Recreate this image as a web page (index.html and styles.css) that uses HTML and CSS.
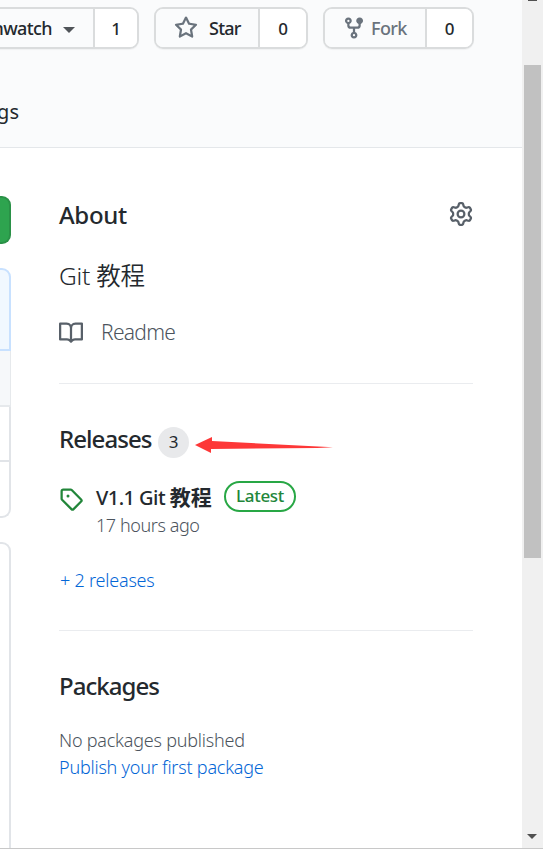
FILE: index.html
```html
<!DOCTYPE html>
<html lang="en">
<head>
<meta charset="utf-8">
<title>Repository</title>
<link rel="stylesheet" href="styles.css">
</head>
<body>
<div class="window">
  <div class="page">
    <header class="header">
      <div class="actions">
        <div class="action action-watch">
          <button class="action-button"><span class="watch-label">Unwatch</span><i class="caret"></i></button>
          <span class="action-count">1</span>
        </div>
        <div class="action action-star">
          <button class="action-button">
            <svg class="icon" viewBox="0 0 16 16"><path d="M8 .25a.75.75 0 01.673.418l1.882 3.815 4.21.612a.75.75 0 01.416 1.279l-3.046 2.97.719 4.192a.75.75 0 01-1.088.791L8 12.347l-3.766 1.98a.75.75 0 01-1.088-.79l.72-4.194L.818 6.374a.75.75 0 01.416-1.28l4.21-.611L7.327.668A.75.75 0 018 .25zm0 2.445L6.615 5.5a.75.75 0 01-.564.41l-3.097.45 2.24 2.184a.75.75 0 01.216.664l-.528 3.084 2.769-1.456a.75.75 0 01.698 0l2.77 1.456-.53-3.084a.75.75 0 01.216-.664l2.24-2.183-3.096-.45a.75.75 0 01-.564-.41L8 2.694v.001z"/></svg>
            <span class="star-label">Star</span>
          </button>
          <span class="action-count">0</span>
        </div>
        <div class="action action-fork">
          <button class="action-button">
            <svg class="icon" viewBox="0 0 16 16"><path d="M5 3.25a.75.75 0 11-1.5 0 .75.75 0 011.5 0zm0 2.122a2.25 2.25 0 10-1.5 0v.878A2.25 2.25 0 005.75 8.5h1.5v2.128a2.251 2.251 0 101.5 0V8.5h1.5a2.25 2.25 0 002.25-2.25v-.878a2.25 2.25 0 10-1.5 0v.878a.75.75 0 01-.75.75h-4.5A.75.75 0 015 6.25v-.878zm3.75 7.378a.75.75 0 11-1.5 0 .75.75 0 011.5 0zm3-8.75a.75.75 0 100-1.5.75.75 0 000 1.5z"/></svg>
            <span class="fork-label">Fork</span>
          </button>
          <span class="action-count">0</span>
        </div>
      </div>
      <nav class="tabs"><span>Settings</span></nav>
    </header>
    <div class="content">
      <div class="files">
        <div class="code-button"></div>
        <div class="notice"></div>
        <div class="commit-row"></div>
        <div class="file-row"></div>
        <div class="file-row file-row-last"></div>
        <div class="readme-box"></div>
      </div>
      <aside class="sidebar">
        <section>
          <div class="about-head">
            <h2 class="about-title">About</h2>
            <svg class="icon" viewBox="0 0 16 16"><path fill-rule="evenodd" d="M7.429 1.525a6.593 6.593 0 011.142 0c.036.003.108.036.137.146l.289 1.105c.147.56.55.967.997 1.189.174.086.341.183.501.29.417.278.97.423 1.53.27l1.102-.303c.11-.03.175.016.195.046.219.31.41.641.573.989.014.031.022.11-.059.19l-.815.806c-.411.406-.562.957-.53 1.456a4.588 4.588 0 010 .582c-.032.499.119 1.05.53 1.456l.815.806c.08.08.073.159.059.19a6.494 6.494 0 01-.573.99c-.02.029-.086.074-.195.045l-1.103-.303c-.559-.153-1.112-.008-1.529.27-.16.107-.327.204-.5.29-.449.222-.851.628-.998 1.189l-.289 1.105c-.029.11-.101.143-.137.146a6.613 6.613 0 01-1.142 0c-.036-.003-.108-.037-.137-.146l-.289-1.105c-.147-.56-.55-.967-.997-1.189a4.502 4.502 0 01-.501-.29c-.417-.278-.97-.423-1.53-.27l-1.102.303c-.11.03-.175-.016-.195-.046a6.492 6.492 0 01-.573-.989c-.014-.031-.022-.11.059-.19l.815-.806c.411-.406.562-.957.53-1.456a4.587 4.587 0 010-.582c.032-.499-.119-1.05-.53-1.456l-.815-.806c-.08-.08-.073-.159-.059-.19a6.44 6.44 0 01.573-.99c.02-.029.086-.075.195-.045l1.103.303c.559.153 1.112.008 1.529-.27.16-.107.327-.204.5-.29.449-.222.851-.628.998-1.189l.289-1.105c.029-.11.101-.143.137-.146zM8 0c-.236 0-.47.01-.701.03-.743.065-1.29.615-1.458 1.261l-.29 1.106c-.017.066-.078.158-.211.224a5.994 5.994 0 00-.668.386c-.123.082-.233.09-.3.071L3.27 2.776c-.644-.177-1.392.02-1.82.63a7.977 7.977 0 00-.704 1.217c-.315.675-.111 1.422.363 1.891l.815.806c.05.048.098.147.088.294a6.084 6.084 0 000 .772c.01.147-.038.246-.088.294l-.815.806c-.474.469-.678 1.216-.363 1.891.2.428.436.835.704 1.218.428.609 1.176.806 1.82.63l1.103-.303c.066-.019.176-.011.299.071.213.143.436.272.668.386.133.066.194.158.212.224l.289 1.106c.169.646.715 1.196 1.458 1.26a8.094 8.094 0 001.402 0c.743-.064 1.29-.614 1.458-1.26l.29-1.106c.017-.066.078-.158.211-.224a5.98 5.98 0 00.668-.386c.123-.082.233-.09.3-.071l1.102.302c.644.177 1.392-.02 1.82-.63.268-.382.505-.789.704-1.217.315-.675.111-1.422-.364-1.891l-.814-.806c-.05-.048-.098-.147-.088-.294a6.1 6.1 0 000-.772c-.01-.147.039-.246.088-.294l.814-.806c.475-.469.679-1.216.364-1.891a7.992 7.992 0 00-.704-1.218c-.428-.609-1.176-.806-1.82-.63l-1.103.303c-.066.019-.176.011-.299-.071a5.991 5.991 0 00-.668-.386c-.133-.066-.194-.158-.212-.224L10.16 1.29C9.99.645 9.444.095 8.701.031A8.094 8.094 0 008 0zm1.5 8a1.5 1.5 0 11-3 0 1.5 1.5 0 013 0zM11 8a3 3 0 11-6 0 3 3 0 016 0z"/></svg>
          </div>
          <p class="description">Git 教程</p>
          <div class="readme">
            <svg class="icon" viewBox="0 0 16 16"><path fill-rule="evenodd" d="M0 1.75A.75.75 0 01.75 1h4.253c1.227 0 2.317.59 3 1.501A3.744 3.744 0 0111.006 1h4.245a.75.75 0 01.75.75v10.5a.75.75 0 01-.75.75h-4.507a2.25 2.25 0 00-1.591.659l-.622.621a.75.75 0 01-1.06 0l-.622-.621A2.25 2.25 0 005.258 13H.75a.75.75 0 01-.75-.75V1.75zm8.755 3a2.25 2.25 0 012.25-2.25H14.5v9h-3.757c-.71 0-1.4.201-1.992.572l.004-7.322zm-1.504 7.324l.004-5.073-.002-2.253A2.25 2.25 0 005.003 2.5H1.5v9h3.757a3.75 3.75 0 011.994.574z"/></svg>
            <span>Readme</span>
          </div>
        </section>
        <section class="releases">
          <div class="releases-head">
            <h2 class="releases-title">Releases</h2>
            <span class="counter">3</span>
            <svg class="arrow" viewBox="0 0 138 18"><path d="M0 9 17 1v4L138 11.2 122 12 16 13v4z"/></svg>
          </div>
          <div class="release">
            <svg class="icon tag" viewBox="0 0 16 16"><path fill-rule="evenodd" d="M2.5 7.775V2.75a.25.25 0 01.25-.25h5.025a.25.25 0 01.177.073l6.25 6.25a.25.25 0 010 .354l-5.025 5.025a.25.25 0 01-.354 0l-6.25-6.25a.25.25 0 01-.073-.177zm-1.5 0V2.75C1 1.784 1.784 1 2.75 1h5.025c.464 0 .91.184 1.238.513l6.25 6.25a1.75 1.75 0 010 2.474l-5.026 5.026a1.75 1.75 0 01-2.474 0l-6.25-6.25A1.75 1.75 0 011 7.775zM6 5a1 1 0 100 2 1 1 0 000-2z"/></svg>
            <div>
              <div class="release-line"><span class="release-name">V1.1 Git <b>教程</b></span><span class="latest">Latest</span></div>
              <div class="small ago">17 hours ago</div>
            </div>
          </div>
          <a class="small link more">+ 2 releases</a>
        </section>
        <section class="packages">
          <h2 class="packages-title">Packages</h2>
          <div class="small none">No packages published</div>
          <a class="small link publish">Publish your first package</a>
        </section>
      </aside>
    </div>
  </div>
  <div class="scrollbar"><div class="up"></div><div class="thumb"></div><div class="down"></div></div>
</div>
</body>
</html>
```
FILE: styles.css
```css
* { box-sizing: border-box; }
body {
  margin: 0;
  background: #fff;
  color: #24292e;
  font-family: "Noto Sans", "Noto Sans CJK SC", sans-serif;
  font-size: 18px;
  overflow: hidden;
}
h2, p { margin: 0; }
.window { display: flex; width: 543px; height: 849px; border-bottom: 1px solid #c8c8c8; }
.page { display: flex; flex-direction: column; width: 522px; overflow: hidden; }
.icon { flex: none; width: 24px; height: 24px; fill: #586069; }

.header { flex: none; height: 148px; padding-top: 7px; background: #fafbfc; border-bottom: 1px solid #e4e7ea; }
.actions { display: flex; justify-content: flex-end; gap: 15px; padding-right: 48px; }
.action {
  display: flex;
  flex: none;
  height: 42px;
  overflow: hidden;
  border: 2px solid #dadcdd;
  border-radius: 9px;
  box-shadow: 0 1px 1px rgba(27, 31, 35, .04);
}
.action-watch { width: 190px; }
.action-star { width: 154px; }
.action-fork { width: 151px; }
.action-button {
  display: flex;
  align-items: center;
  flex: 1;
  padding: 0;
  border: 0;
  background: #fafbfc;
  color: #24292e;
  font: 500 18px/38px "Noto Sans", sans-serif;
}
.action-watch .action-button { justify-content: flex-end; padding-right: 18px; }
.action-star .action-button { padding-left: 18px; gap: 11px; }
.action-fork .action-button { padding-left: 17px; gap: 5px; color: #6a737d; }
.action .icon { fill: #6a737d; margin-bottom: 1px; }
.action-count {
  flex: none;
  width: 44px;
  border-left: 2px solid #dadcdd;
  background: #fff;
  font-weight: 500;
  font-size: 17px;
  line-height: 39px;
  text-align: center;
}
.action-star .action-count { width: 48px; }
.action-fork .action-count { width: 47px; }
.watch-label { letter-spacing: -.6px; }
.star-label { letter-spacing: -.75px; }
.fork-label { letter-spacing: -.6px; }
.caret { margin: 4px 0 0 11px; border: 6px solid transparent; border-top-color: #505459; border-bottom: 0; }
.tabs { display: flex; justify-content: flex-end; width: 19px; margin-top: 48px; font-size: 20px; line-height: 30px; }

.content { display: flex; flex: 1; min-height: 0; }
.files { width: 11px; padding-top: 48px; }
.code-button { height: 48px; background: #2ea44f; border: 2px solid #2a9147; border-left: 0; border-radius: 0 9px 9px 0; }
.notice { height: 83px; margin-top: 24px; background: #f1f8ff; border: 2px solid #c8e1ff; border-left: 0; border-radius: 0 9px 0 0; }
.commit-row { height: 56px; background: #f6f8fa; border: solid #e6e9ec; border-width: 0 1px 2px 0; }
.file-row { height: 55px; border: solid #e1e4e8; border-width: 0 2px 2px 0; }
.file-row-last { height: 56px; border-radius: 0 0 9px 0; }
.readme-box { height: 330px; margin-top: 24px; border: 2px solid #e1e4e8; border-left: 0; border-radius: 0 9px 0 0; }

.sidebar { width: 414px; margin-left: 48px; padding-top: 51px; }
.sidebar h2 { font-size: 24px; line-height: 32px; height: 32px; font-weight: 500; letter-spacing: -.95px; }
.sidebar .about-title { letter-spacing: -.35px; }
.about-head { display: flex; justify-content: space-between; align-items: flex-start; }
.about-head .icon { margin-top: 3px; }
.description { margin-top: 27px; font-size: 24.5px; line-height: 36px; font-weight: 350; letter-spacing: -.25px; }
.readme { display: flex; align-items: center; gap: 18px; height: 30px; margin-top: 24px; margin-bottom: -1px; color: #4c545d; font-size: 21px; line-height: 30px; font-weight: 300; letter-spacing: -.7px; }
.readme span { margin-top: -2px; }
.releases { height: 247px; margin-top: 36px; padding-top: 39px; border-top: 1px solid #eaecef; }
.releases-head { display: flex; height: 32px; }
.releases-title { width: 92px; white-space: nowrap; }
.counter { width: 31px; height: 31px; margin: 4px 0 0 7px; border-radius: 16px; background: #e8e9eb; font-size: 17px; line-height: 30px; text-align: center; }
.arrow { width: 138px; height: 18px; margin: 13px 0 0 6px; fill: #fd3838; }
.release { display: flex; gap: 13px; margin-top: 28px; }
.tag { fill: #22863a; margin-top: 4px; }
.release-line { display: flex; height: 28px; }
.release-name { width: 117px; font-size: 20px; line-height: 29px; font-weight: 500; letter-spacing: -.55px; white-space: nowrap; }
.release-name b { font-size: 21px; letter-spacing: 0; }
.latest { height: 31px; width: 72px; margin: -2px 0 0 11px; border: 2px solid #28a745; border-radius: 16px; color: #22863a; font-size: 17px; font-weight: 500; line-height: 26px; letter-spacing: -.3px; text-align: center; }
.small { display: block; font-size: 18px; line-height: 26px; font-weight: 300; letter-spacing: -.22px; color: #4c545d; white-space: nowrap; width: max-content; }
.ago { margin-top: 1px; letter-spacing: -.42px; }
.link { color: #0366d6; }
.more { margin-top: 29px; padding-left: 1px; }
.packages { padding-top: 39px; border-top: 1px solid #eaecef; }
.none { margin-top: 25px; }
.publish { margin-top: 1px; }

.scrollbar { display: flex; flex-direction: column; align-items: center; width: 21px; padding-right: 1px; background: #f0f0f0; }
.up { width: 9px; height: 1px; background: #505050; }
.thumb { width: 17px; height: 493px; margin-top: 64px; background: #c1c1c1; }
.down { margin-top: 276px; border: 5px solid transparent; border-top-color: #505050; border-bottom: 0; }
```
